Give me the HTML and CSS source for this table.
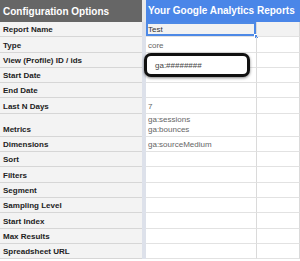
FILE: index.html
```html
<!DOCTYPE html>
<html lang="en">
<head>
  <meta charset="UTF-8">
  <title>Report Configuration</title>
  <link rel="stylesheet" href="styles.css">
</head>
<body>

  <div class="sheet">
    <div class="row head">
      <div class="label">Configuration Options</div>
      <div class="freeze"></div>
      <div class="value title">Your Google Analytics Reports</div>
    </div>

    <div class="row shaded">
      <div class="label">Report Name</div>
      <div class="freeze"></div>
      <div class="value selected dark">Test<span class="handle"></span></div>
      <div class="value"></div>
    </div>
    <div class="row">
      <div class="label">Type</div>
      <div class="freeze"></div>
      <div class="value">core</div>
      <div class="value"></div>
    </div>
    <div class="row">
      <div class="label">View (Profile) ID / ids</div>
      <div class="freeze"></div>
      <div class="value"></div>
      <div class="value"></div>
    </div>
    <div class="row">
      <div class="label">Start Date</div>
      <div class="freeze"></div>
      <div class="value"></div>
      <div class="value"></div>
    </div>
    <div class="row">
      <div class="label">End Date</div>
      <div class="freeze"></div>
      <div class="value"></div>
      <div class="value"></div>
    </div>
    <div class="row">
      <div class="label">Last N Days</div>
      <div class="freeze"></div>
      <div class="value">7</div>
      <div class="value"></div>
    </div>
    <div class="row tall">
      <div class="label">Metrics</div>
      <div class="freeze"></div>
      <div class="value">ga:sessions<br>ga:bounces</div>
      <div class="value"></div>
    </div>
    <div class="row">
      <div class="label">Dimensions</div>
      <div class="freeze"></div>
      <div class="value">ga:sourceMedium</div>
      <div class="value"></div>
    </div>
    <div class="row">
      <div class="label">Sort</div>
      <div class="freeze"></div>
      <div class="value"></div>
      <div class="value"></div>
    </div>
    <div class="row">
      <div class="label">Filters</div>
      <div class="freeze"></div>
      <div class="value"></div>
      <div class="value"></div>
    </div>
    <div class="row">
      <div class="label">Segment</div>
      <div class="freeze"></div>
      <div class="value"></div>
      <div class="value"></div>
    </div>
    <div class="row">
      <div class="label">Sampling Level</div>
      <div class="freeze"></div>
      <div class="value"></div>
      <div class="value"></div>
    </div>
    <div class="row">
      <div class="label">Start Index</div>
      <div class="freeze"></div>
      <div class="value"></div>
      <div class="value"></div>
    </div>
    <div class="row">
      <div class="label">Max Results</div>
      <div class="freeze"></div>
      <div class="value"></div>
      <div class="value"></div>
    </div>
    <div class="row">
      <div class="label">Spreadsheet URL</div>
      <div class="freeze"></div>
      <div class="value"></div>
      <div class="value"></div>
    </div>

    <!-- callout over the profile id cell -->
    <div class="callout">ga:########</div>
  </div>

</body>
</html>
```

FILE: styles.css
```css
body {
  margin: 0;
  padding: 0;
  background: #fff;
  font-family: "Liberation Sans", Arial, sans-serif;
}
.sheet {
  position: relative;
  width: 300px;
  height: 261px;
  overflow: hidden;
}
.row {
  display: grid;
  grid-template-columns: 142px 4px 111px 43px;
  height: 15.3px;
}
.row.tall {
  height: 23px;
}
.label {
  background: #f3f3f3;
  border-bottom: 1px solid #d6d6d6;
  font-size: 8px;
  font-weight: bold;
  color: #222;
  padding: 0 0 2px 3px;
  display: flex;
  align-items: flex-end;
}
.freeze {
  background: #dde1ea;
}
.value {
  position: relative;
  border-bottom: 1px solid #e2e2e2;
  border-right: 1px solid #dadada;
  font-size: 8px;
  color: #666;
  line-height: 10px;
  padding: 0 0 1px 2px;
  display: flex;
  align-items: flex-end;
}
.value.dark {
  color: #333;
}
.shaded .value {
  background: #f2f2f2;
}
.selected {
  box-shadow: inset 0 0 0 2px #4d89e6;
}
.handle {
  position: absolute;
  right: -3px;
  bottom: -3px;
  width: 5px;
  height: 5px;
  background: #4d89e6;
  border: 1px solid #fff;
  box-sizing: border-box;
}

/* header band */
.head {
  height: 22px;
}
.head .label {
  background: #666;
  color: #fff;
  font-size: 10px;
  border-bottom: none;
  align-items: center;
  padding: 0 0 0 3px;
}
.head .freeze {
  background: #e8e8e8;
}
.head .title {
  grid-column: span 2;
  background: #4a86e8;
  color: #fff;
  font-size: 10px;
  font-weight: bold;
  border: none;
  align-items: center;
  padding: 0 0 0 2px;
}

.callout {
  position: absolute;
  left: 144px;
  top: 53px;
  width: 106px;
  height: 24px;
  box-sizing: border-box;
  border: 3px solid #111;
  border-radius: 7px;
  background: #fff;
  box-shadow: 0 1px 3px rgba(0, 0, 0, 0.5);
  font-size: 8px;
  color: #444;
  padding-left: 8px;
  display: flex;
  align-items: center;
}
```
